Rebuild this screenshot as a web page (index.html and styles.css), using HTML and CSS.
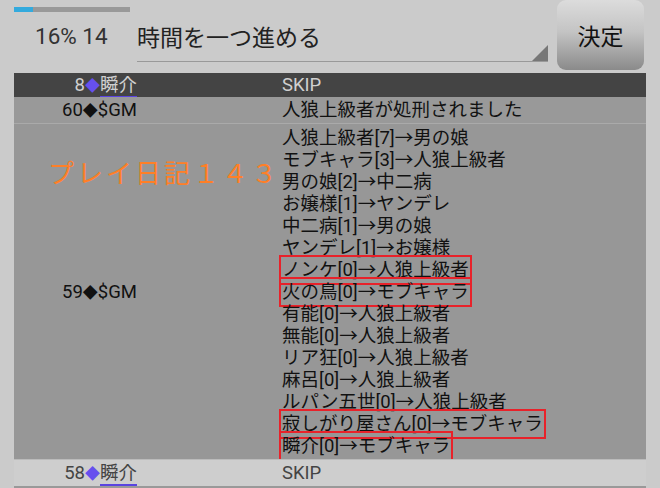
FILE: index.html
```html
<!DOCTYPE html>
<html lang="ja">
<head>
    <meta charset="UTF-8">
    <title>ログ</title>
    <link rel="stylesheet" href="styles.css">
</head>
<body>
    <div class="top">
        <div class="progress-area">
            <div class="progress"><div class="progress-fill" style="width: 16%"></div></div>
            <div class="progress-label">16% 14</div>
        </div>
        <div class="select">
            <span class="select-text">時間を一つ進める</span>
            <span class="select-arrow"></span>
        </div>
        <button class="decide">決定</button>
    </div>

    <div class="log">
        <div class="row row-dark">
            <div class="who">8<span class="dia dia-blue">◆</span><span class="name">瞬介</span></div>
            <div class="what">SKIP</div>
        </div>
        <div class="row row-mid">
            <div class="who">60<span class="dia">◆</span>$GM</div>
            <div class="what">人狼上級者が処刑されました</div>
        </div>
        <div class="row row-big">
            <div class="who">59<span class="dia">◆</span>$GM</div>
            <div class="what lines">
                <div>人狼上級者[7]→男の娘</div>
                <div>モブキャラ[3]→人狼上級者</div>
                <div>男の娘[2]→中二病</div>
                <div>お嬢様[1]→ヤンデレ</div>
                <div>中二病[1]→男の娘</div>
                <div>ヤンデレ[1]→お嬢様</div>
                <div><span class="mark">ノンケ[0]→人狼上級者</span></div>
                <div><span class="mark">火の鳥[0]→モブキャラ</span></div>
                <div>有能[0]→人狼上級者</div>
                <div>無能[0]→人狼上級者</div>
                <div>リア狂[0]→人狼上級者</div>
                <div>麻呂[0]→人狼上級者</div>
                <div>ルパン五世[0]→人狼上級者</div>
                <div><span class="mark">寂しがり屋さん[0]→モブキャラ</span></div>
                <div><span class="mark">瞬介[0]→モブキャラ</span></div>
            </div>
            <div class="stamp">プレイ日記１４３</div>
        </div>
        <div class="row row-light">
            <div class="who">58<span class="dia dia-blue">◆</span><span class="name">瞬介</span></div>
            <div class="what">SKIP</div>
        </div>
    </div>
</body>
</html>
```

FILE: styles.css
```css
body {
    margin: 0;
    background-color: #cbcbcb;
    font-family: Roboto, "Noto Sans CJK JP", sans-serif;
    width: 660px;
    height: 488px;
    overflow: hidden;
}
.top {
    display: flex;
    height: 72px;
}
.progress-area {
    width: 123px;
    padding-left: 14px;
}
.progress {
    width: 116px;
    height: 5px;
    margin-top: 7px;
    background-color: #999;
}
.progress-fill {
    height: 100%;
    background-color: #33aadd;
}
.progress-label {
    margin-top: 11px;
    padding-left: 21px;
    font-size: 22.5px;
    color: #333;
}
.select {
    position: relative;
    width: 411px;
    height: 61px;
    border-bottom: 1px solid #999;
}
.select-text {
    display: block;
    padding-top: 19px;
    font-size: 23px;
    color: #222;
}
.select-arrow {
    position: absolute;
    right: 0;
    bottom: 0;
    width: 0;
    height: 0;
    border-left: 16px solid transparent;
    border-bottom: 16px solid #777;
}
.decide {
    width: 87px;
    height: 70px;
    margin-left: 9px;
    border: none;
    border-radius: 9px;
    background: linear-gradient(#dcdcdc, #c4c4c4 45%, #8a8a8a);
    font-family: "Noto Sans CJK JP", sans-serif;
    font-size: 23px;
    color: #111;
    padding: 0;
}
.log {
    width: 632px;
    margin-left: 14px;
    margin-top: 1px;
}
.row {
    position: relative;
    display: grid;
    grid-template-columns: 123px 1fr;
    font-size: 18.5px;
    line-height: 22px;
}
.who {
    text-align: right;
    align-self: center;
}
.what {
    padding-left: 145px;
}
.row-dark {
    background-color: #444;
    color: #d0d0d0;
    height: 24px;
    align-items: center;
}
.row-mid {
    background-color: #999;
    color: #111;
    height: 26px;
    align-items: center;
    border-bottom: 1px solid #aaa;
}
.row-big {
    background-color: #979797;
    color: #111;
    padding-top: 3px;
    padding-bottom: 2px;
}
.row-light {
    background-color: #cecece;
    color: #444;
    height: 26px;
    align-items: center;
    border-top: 1px solid #bbb;
    border-bottom: 2px solid #999;
}
.dia {
    font-size: 15px;
}
.dia-blue {
    color: #6650ee;
}
.name {
    border-bottom: 2px solid #5a44e0;
}
.mark {
    border: 2px solid #e8222a;
    padding: 2px 1px;
    margin-left: -3px;
}
.stamp {
    position: absolute;
    left: 34px;
    top: 37px;
    font-family: "Noto Sans CJK JP", sans-serif;
    font-size: 26px;
    letter-spacing: 3px;
    color: #ff7f27;
}
```
